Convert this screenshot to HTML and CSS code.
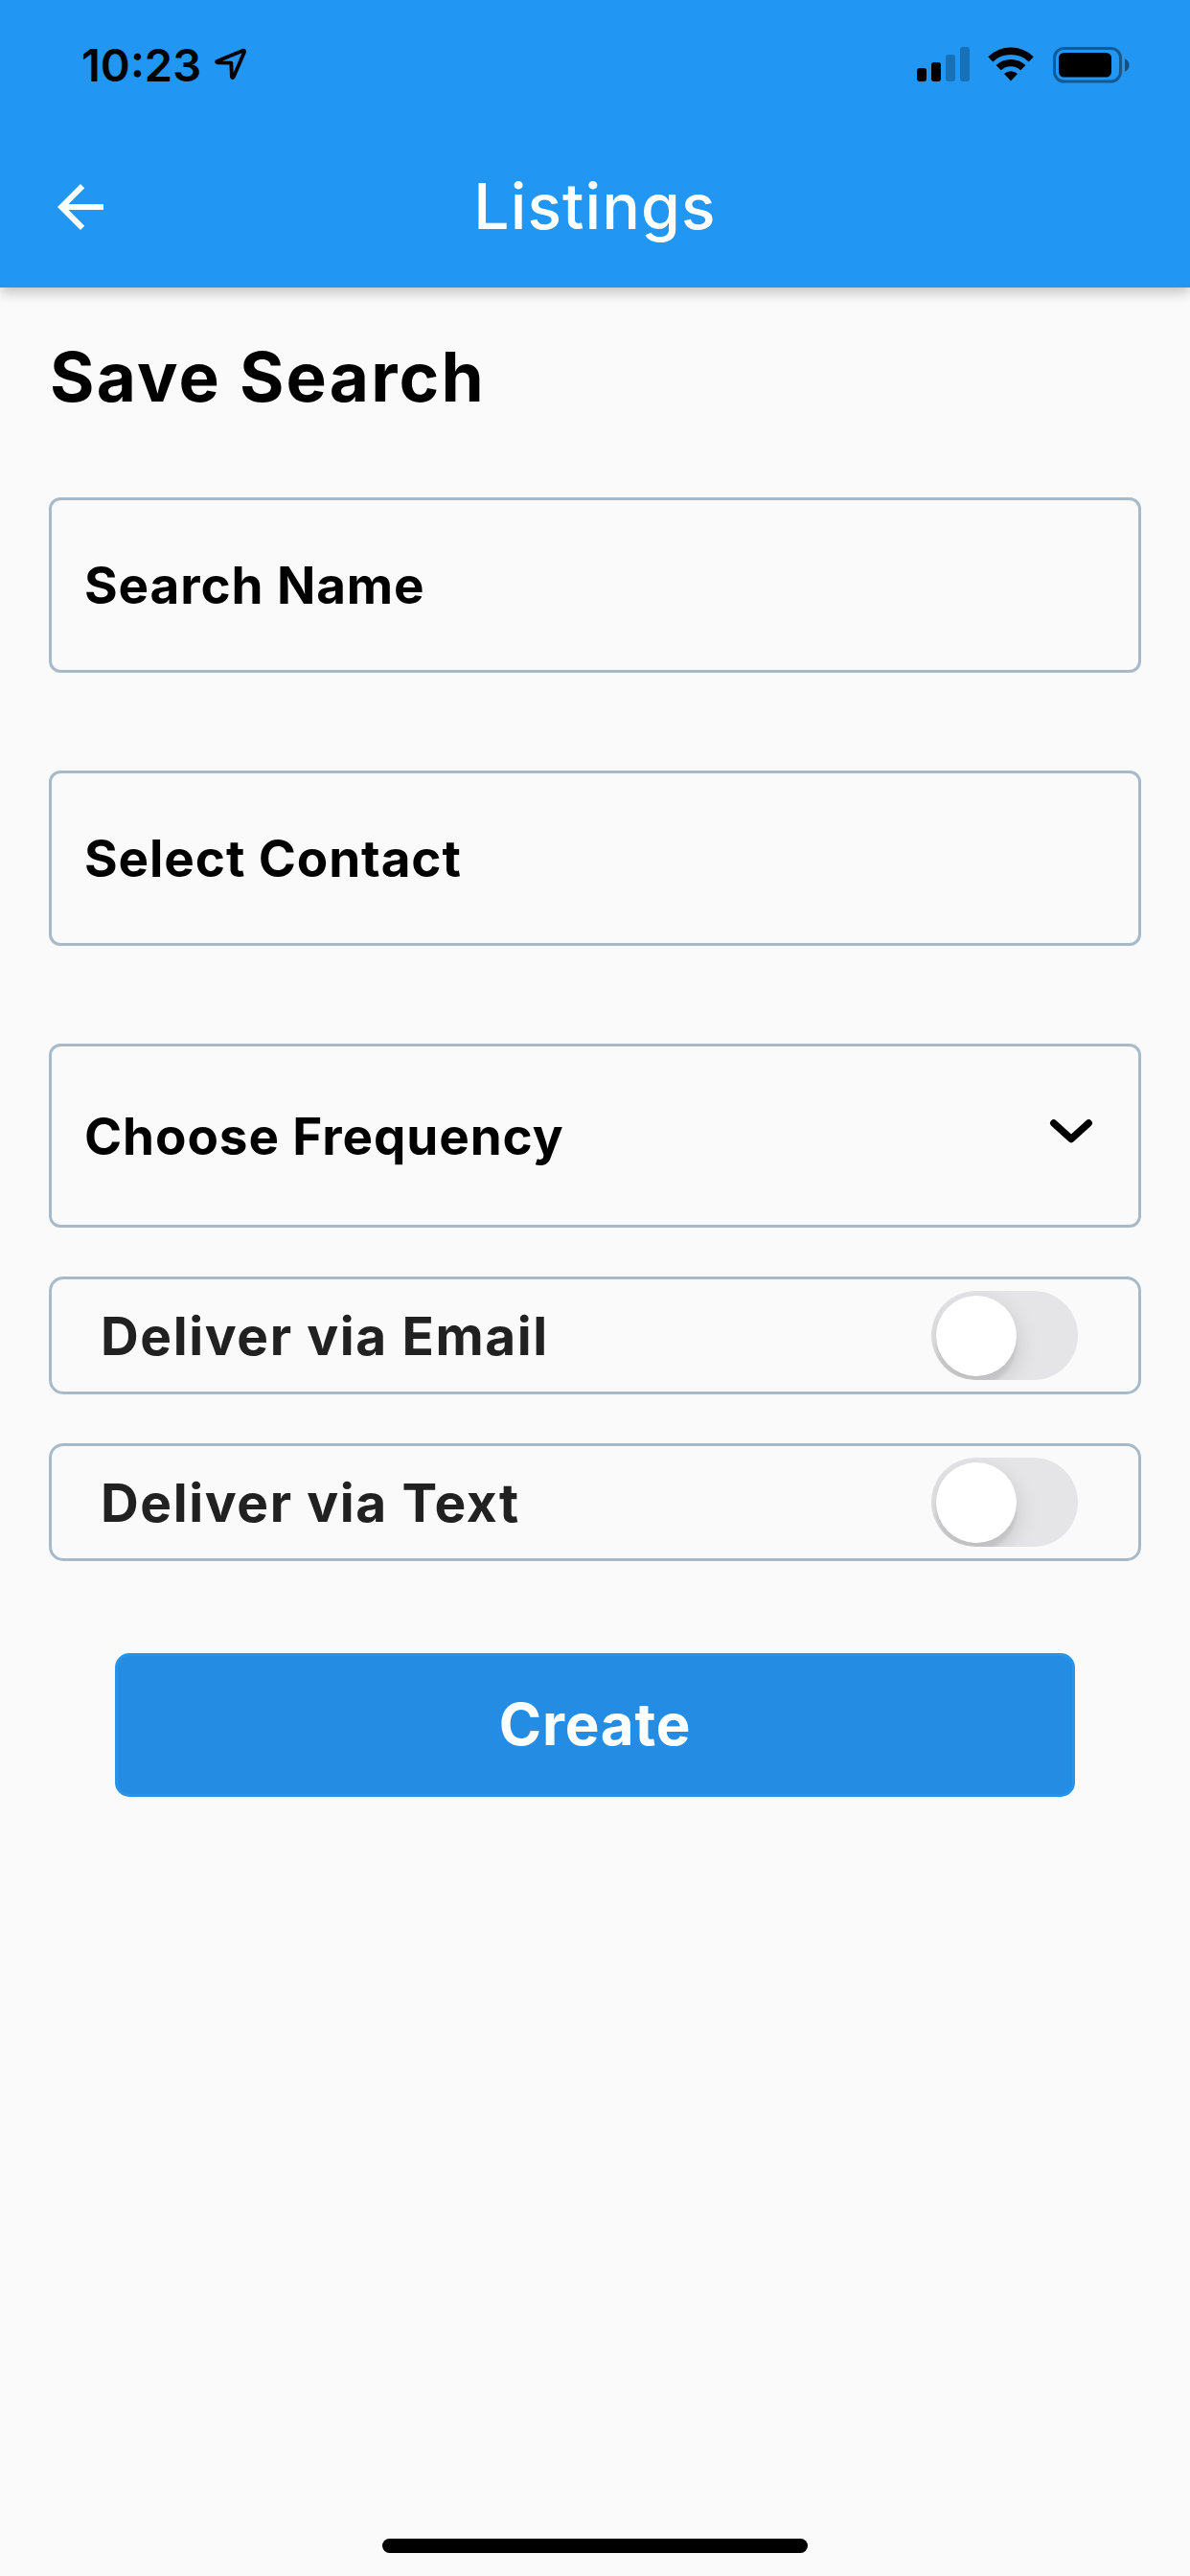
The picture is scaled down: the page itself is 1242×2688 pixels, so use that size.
FILE: index.html
```html
<!DOCTYPE html>
<html lang="en">
<head>
    <meta charset="UTF-8">
    <meta name="viewport" content="width=device-width, initial-scale=1.0">
    <title>Listings</title>

    <link rel="stylesheet" href="styles.css">
</head>
<body>
    <header class="header">
        <div class="statusBar">
            <div class="statusLeft">
                <span class="time">10:23</span>
                <svg class="location" viewBox="0 0 36 36" width="36" height="36">
                    <path d="M3.8 15.8 L30 4.9 Q32.6 4 31.8 6.8 L20.8 32.3 Q19.5 34.3 18.9 32 L18.3 17.6 L4 17.3 Q2.2 16.5 3.8 15.8 Z" />
                </svg>
            </div>
            <div class="statusRight">
                <svg viewBox="0 0 56 36" width="56" height="36">
                    <rect x="0" y="22" width="10" height="14" rx="3" />
                    <rect x="15" y="16" width="10" height="20" rx="3" />
                    <rect x="30" y="8" width="10" height="28" rx="3" opacity=".25" />
                    <rect x="45" y="0" width="10" height="36" rx="3" opacity=".25" />
                </svg>
                <svg class="wifi" viewBox="0 0 48 36" width="48" height="36">
                    <path d="M0.3 10.2 A34 34 0 0 1 47.7 10.2 L42.7 15.4 A27 27 0 0 0 5.3 15.4 Z" />
                    <path d="M8.6 19 A22.5 22.5 0 0 1 39.4 19 L34.2 24.3 A15 15 0 0 0 13.8 24.3 Z" />
                    <path d="M17 28 A10.5 10.5 0 0 1 31 28 L24 35.5 Z" />
                </svg>
                <svg class="battery" viewBox="0 0 80 38" width="80" height="38">
                    <rect x="1.5" y="1.5" width="69" height="34.5" rx="10" fill="none" stroke="#000" stroke-width="3" opacity=".4" />
                    <rect x="6" y="6" width="55" height="25.5" rx="5.5" />
                    <path d="M75 12 Q79.5 15 79.5 19 Q79.5 23 75 26 Z" opacity=".45" />
                </svg>
            </div>
        </div>
        <div class="appBar">
            <svg class="back" viewBox="0 0 24 24" width="72" height="72">
                <path d="M20 11H7.83l5.59-5.59L12 4l-8 8 8 8 1.41-1.41L7.83 13H20v-2z" />
            </svg>
            <span class="title">Listings</span>
        </div>
    </header>

    <main class="content">
        <h1 class="heading">Save Search</h1>

        <div class="field">
            <span class="label">Search Name</span>
        </div>
        <div class="field">
            <span class="label">Select Contact</span>
        </div>
        <div class="field select">
            <span class="label">Choose Frequency</span>
            <svg class="chevron" viewBox="0 0 46 28" width="46" height="28">
                <path d="M4.8 5 L23 21.6 L41.2 5" />
            </svg>
        </div>

        <div class="switchRow">
            <span class="switchLabel">Deliver via Email</span>
            <div class="switch"><div class="thumb"></div></div>
        </div>
        <div class="switchRow">
            <span class="switchLabel">Deliver via Text</span>
            <div class="switch"><div class="thumb"></div></div>
        </div>

        <button class="createButton">Create</button>
    </main>

    <div class="homeIndicator"></div>
</body>
</html>
```

FILE: styles.css
```css
* {
    box-sizing: border-box;
}

html, body {
    margin: 0;
    background-color: #fafafa;
    font-family: Inter, "Liberation Sans", sans-serif;
    color: #000;
}

body {
    height: 2688px;
    display: flex;
    flex-direction: column;
}

svg {
    display: block;
    flex: none;
}

.header {
    height: 300px;
    background-color: #2196f3;
    box-shadow: 0 6px 12px rgba(0, 0, 0, .14), 0 3px 15px rgba(0, 0, 0, .1);
}

/* status bar */
.statusBar {
    height: 132px;
    display: flex;
    justify-content: space-between;
    padding: 48px 63px 0 85px;
}

.statusLeft, .statusRight {
    display: flex;
    height: 40px;
}

.statusLeft {
    gap: 12px;
}

.time {
    font-size: 47px;
    font-weight: 600;
    line-height: 40px;
    width: 126px;
    white-space: nowrap;
}

.location path {
    fill: none;
    stroke: #000;
    stroke-width: 3.8;
    stroke-linejoin: round;
}

.statusRight {
    padding-top: 1px;
}

.wifi {
    margin-left: 18px;
}

.battery {
    margin-left: 20px;
}

/* app bar */
.appBar {
    height: 168px;
    display: grid;
    grid-template-columns: 72px 1fr 72px;
    align-items: center;
    padding: 0 48px;
    color: #fff;
}

.back {
    fill: #fff;
}

.title {
    font-size: 66px;
    font-weight: 500;
    line-height: 80px;
    text-align: center;
    letter-spacing: 1.1px;
    padding-bottom: 2px;
}

/* form */
.content {
    flex: 1;
    display: flex;
    flex-direction: column;
    padding: 53px 51px 0;
}

.heading {
    margin: 0 0 85px 1px;
    font-size: 71px;
    font-weight: 700;
    line-height: 81px;
    letter-spacing: 2.2px;
}

.field {
    height: 183px;
    display: flex;
    align-items: center;
    justify-content: space-between;
    border: 3px solid #a7bac9;
    border-radius: 12px;
    padding: 0 47px 0 34px;
    margin-bottom: 102px;
}

.label {
    font-size: 53px;
    font-weight: 700;
    line-height: 60px;
    letter-spacing: 0.9px;
    padding-top: 1px;
}

.select {
    height: 192px;
    margin-bottom: 51px;
}

.chevron {
    margin-bottom: 8px;
}

.chevron path {
    fill: none;
    stroke: #000;
    stroke-width: 7.5;
    stroke-linecap: round;
    stroke-linejoin: round;
}

.switchRow {
    height: 123px;
    display: flex;
    align-items: center;
    justify-content: space-between;
    border: 3px solid #a7bac9;
    border-radius: 15px;
    padding: 0 63px 0 51px;
    margin-bottom: 51px;
}

.switchLabel {
    font-size: 55px;
    font-weight: 700;
    line-height: 60px;
    letter-spacing: 1.6px;
    color: #212121;
}

.switch {
    width: 153px;
    height: 93px;
    padding: 4.5px;
    border-radius: 47px;
    background-color: #e5e5e7;
    overflow: hidden;
}

.thumb {
    width: 84px;
    height: 84px;
    border-radius: 50%;
    background-color: #fff;
    box-shadow: 0 9px 24px rgba(0, 0, 0, .15), 0 9px 3px rgba(0, 0, 0, .06);
}

.createButton {
    height: 150px;
    margin: 45px 69px 0;
    padding: 0 0 2px;
    border: 3px solid #2794ea;
    border-radius: 15px;
    background-color: #248de3;
    color: #fff;
    font-family: inherit;
    font-size: 60px;
    font-weight: 700;
    letter-spacing: 0.8px;
}

.homeIndicator {
    width: 444px;
    height: 15px;
    margin: 0 auto 24px;
    border-radius: 8px;
    background-color: #000;
}
```
